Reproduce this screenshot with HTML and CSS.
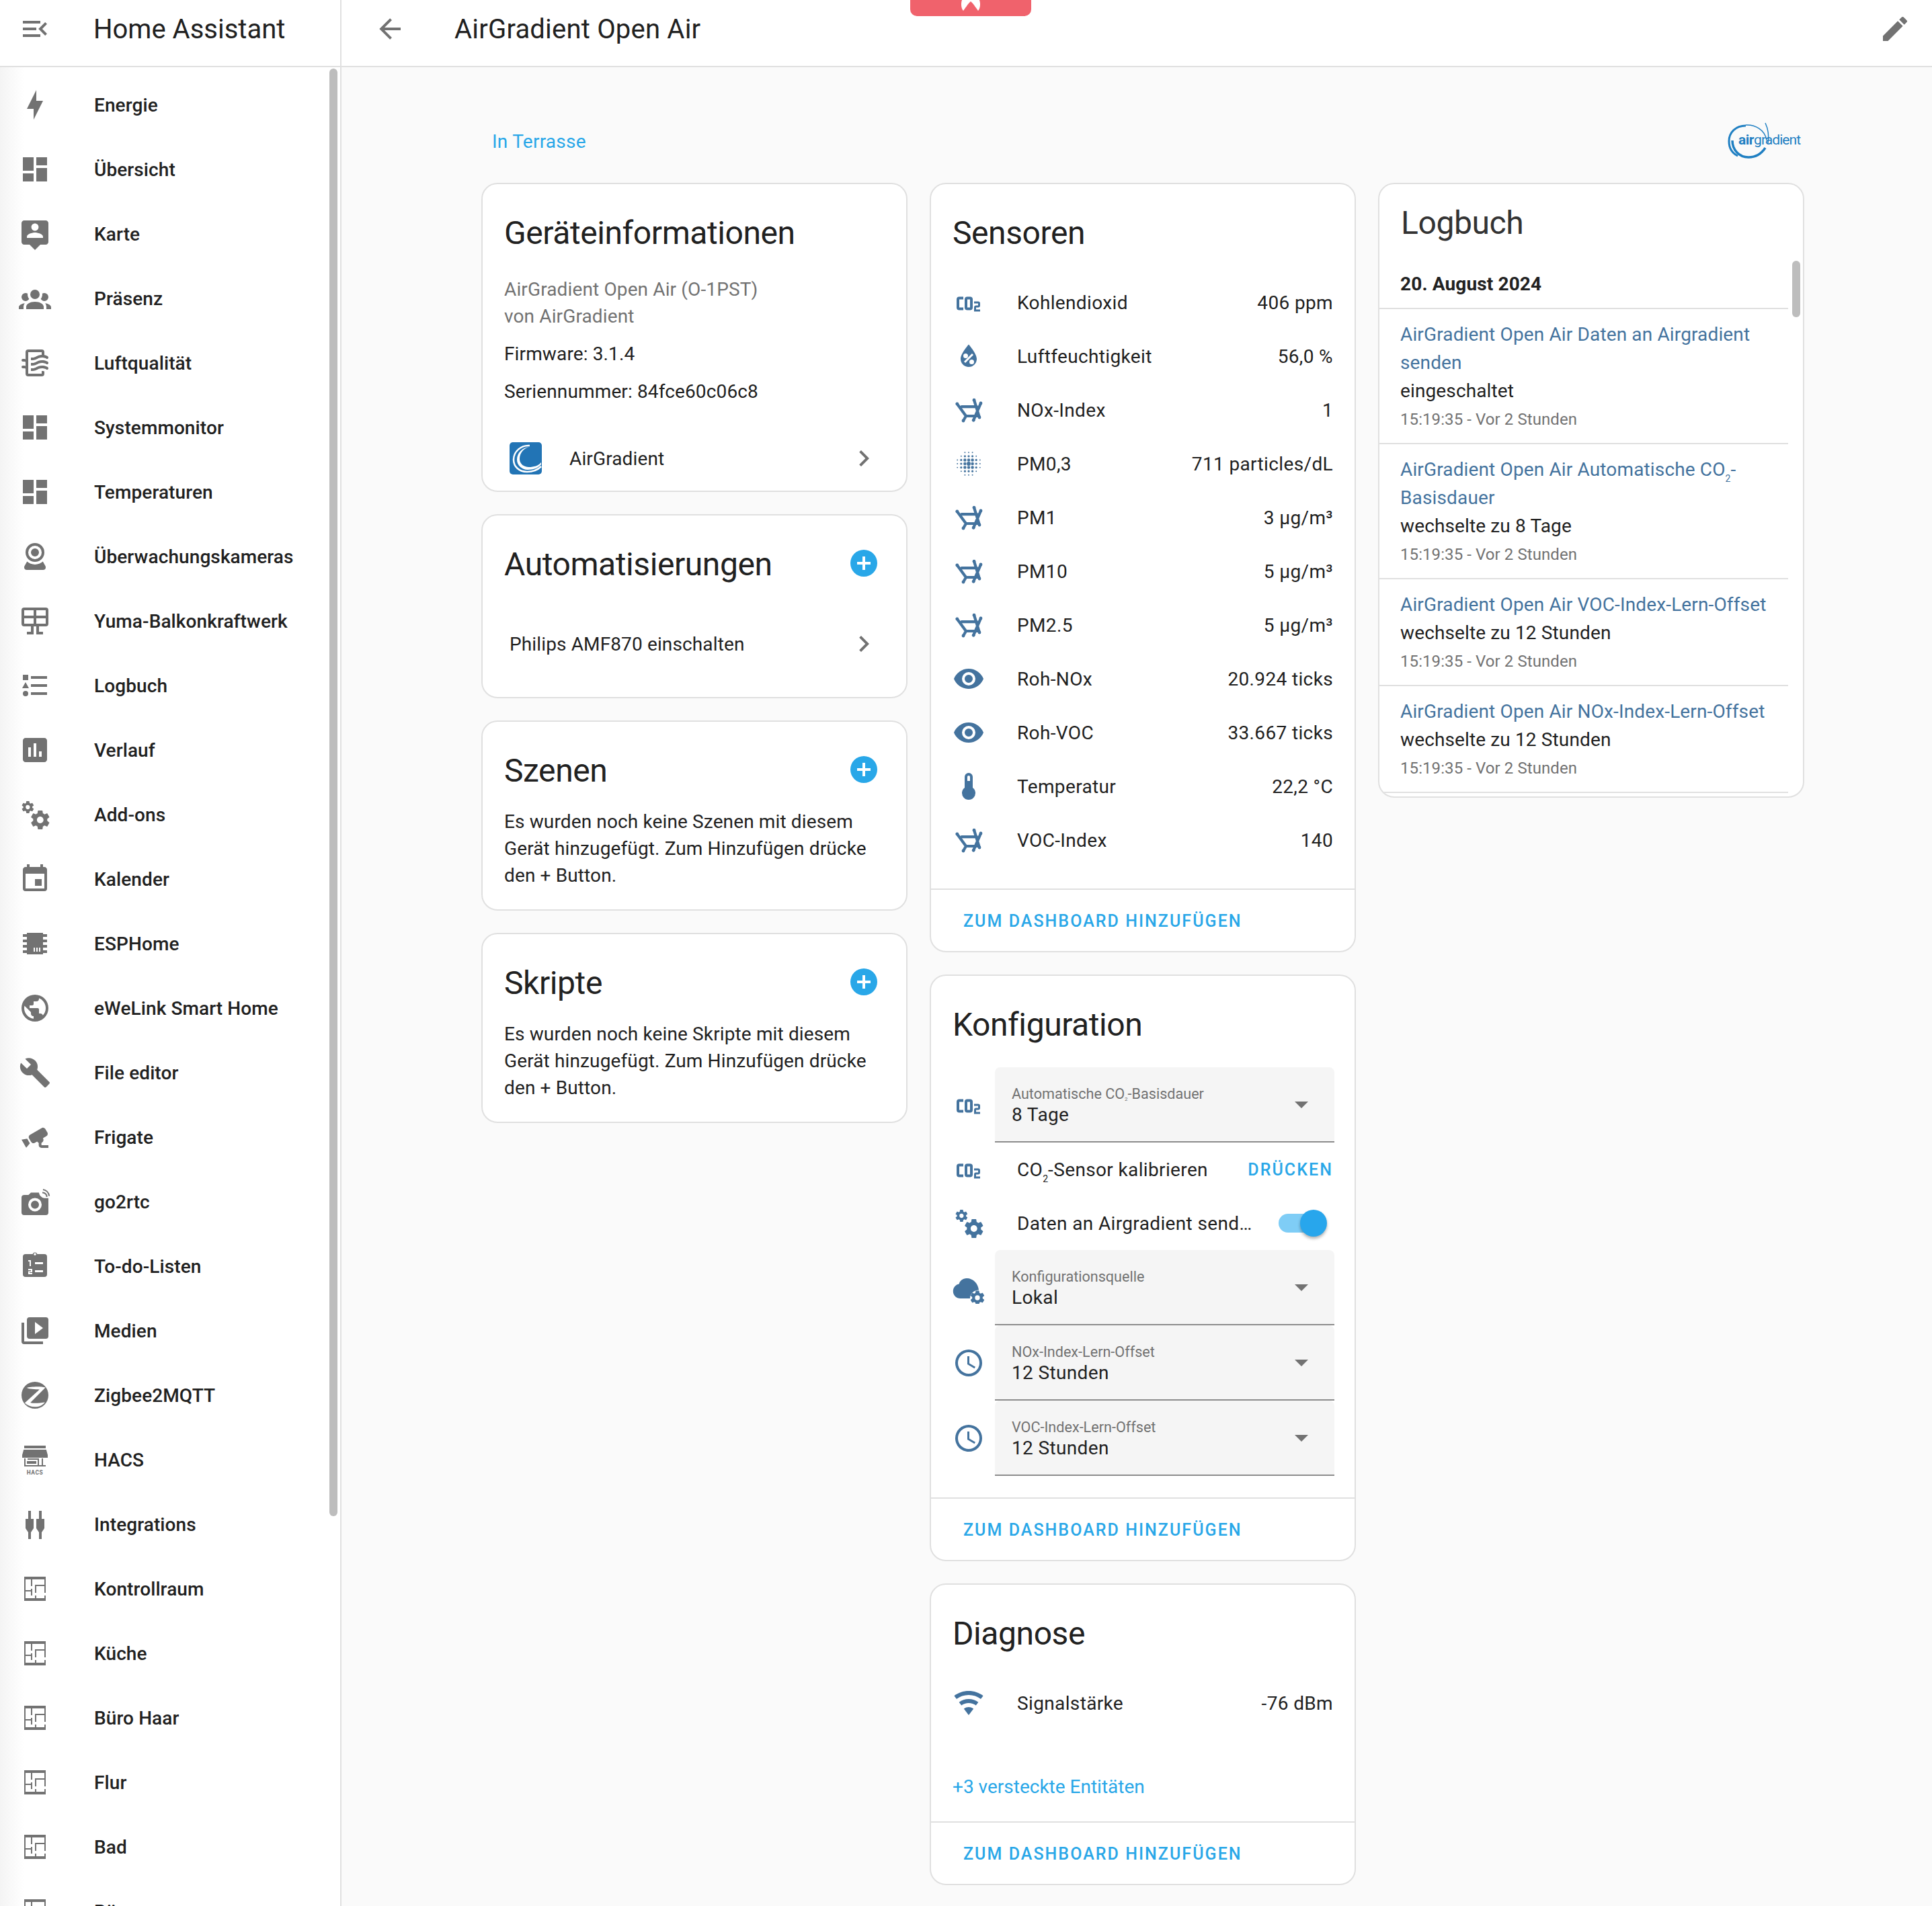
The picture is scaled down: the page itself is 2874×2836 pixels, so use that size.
FILE: index.html
```html
<!DOCTYPE html>
<html lang="de">
<head>
<meta charset="utf-8">
<title>AirGradient Open Air</title>
<link rel="stylesheet" href="styles.css">
</head>
<body>
<svg class="defs" aria-hidden="true">
<symbol id="menu-open" viewBox="0 0 24 24"><path d="M21,15.61L19.59,17L14.58,12L19.59,7L21,8.39L17.44,12L21,15.61M3,6H16V8H3V6M3,13V11H13V13H3M3,18V16H16V18H3Z"/></symbol>
<symbol id="bolt" viewBox="0 0 24 24"><path d="M11 15H6L13 1V9H18L11 23V15Z"/></symbol>
<symbol id="dash" viewBox="0 0 24 24"><path d="M13,3V9H21V3M13,21H21V11H13M3,21H11V15H3M3,13H11V3H3V13Z"/></symbol>
<symbol id="pin" viewBox="0 0 24 24"><path d="M20 2H4C2.9 2 2 2.9 2 4V18C2 19.1 2.9 20 4 20H8L12 24L16 20H20C21.1 20 22 19.1 22 18V4C22 2.9 21.1 2 20 2M12 4.3C13.5 4.3 14.7 5.5 14.7 7S13.5 9.7 12 9.7 9.3 8.5 9.3 7 10.5 4.3 12 4.3M18 15H6V14.1C6 12.1 10 11 12 11S18 12.1 18 14.1V15Z"/></symbol>
<symbol id="group" viewBox="0 0 24 24"><path d="M12,5.5A3.5,3.5 0 0,1 15.5,9A3.5,3.5 0 0,1 12,12.5A3.5,3.5 0 0,1 8.5,9A3.5,3.5 0 0,1 12,5.5M5,8C5.56,8 6.08,8.15 6.53,8.42C6.38,9.85 6.8,11.27 7.66,12.38C7.16,13.34 6.16,14 5,14A3,3 0 0,1 2,11A3,3 0 0,1 5,8M19,8A3,3 0 0,1 22,11A3,3 0 0,1 19,14C17.84,14 16.84,13.34 16.34,12.38C17.2,11.27 17.62,9.85 17.47,8.42C17.92,8.15 18.44,8 19,8M5.5,18.25C5.5,16.18 8.41,14.5 12,14.5C15.59,14.5 18.5,16.18 18.5,18.25V20H5.5V18.25M0,20V18.5C0,17.11 1.89,15.94 4.45,15.6C3.86,16.28 3.5,17.22 3.5,18.25V20H0M24,20H20.5V18.25C20.5,17.22 20.14,16.28 19.55,15.6C22.11,15.94 24,17.11 24,18.5V20Z"/></symbol>
<symbol id="air" viewBox="0 0 24 24"><path d="M19,18.31V20A2,2 0 0,1 17,22H7A2,2 0 0,1 5,20V16.3C4.54,16.12 3.95,16 3,16A1,1 0 0,1 2,15A1,1 0 0,1 3,14C3.82,14 4.47,14.08 5,14.21V11.3C4.54,11.12 3.95,11 3,11A1,1 0 0,1 2,10A1,1 0 0,1 3,9C3.82,9 4.47,9.08 5,9.21V4A2,2 0 0,1 7,2H17A2,2 0 0,1 19,4V6.16C20.78,6.47 21.54,7.13 21.71,7.29C22.1,7.68 22.1,8.32 21.71,8.71C21.32,9.1 20.8,9.09 20.29,8.71C20.29,8.71 19.25,8 17,8C15.74,8 14.91,8.41 13.95,8.9C12.91,9.41 11.74,10 10,10C9.64,10 9.31,10 9,9.96V7.95C9.3,8 9.63,8 10,8C11.26,8 12.09,7.59 13.05,7.11C14.09,6.59 15.27,6 17,6V4H7V20H17V18C18.5,18 18.97,18.29 19,18.31M17,10C15.27,10 14.09,10.59 13.05,11.11C12.09,11.59 11.26,12 10,12C9.63,12 9.3,12 9,11.95V13.96C9.31,14 9.64,14 10,14C11.74,14 12.91,13.41 13.95,12.9C14.91,12.42 15.74,12 17,12C19.25,12 20.29,12.71 20.29,12.71C20.8,13.1 21.32,13.1 21.71,12.71C22.1,12.32 22.1,11.69 21.71,11.29C21.5,11.08 20.25,10 17,10M17,14C15.27,14 14.09,14.59 13.05,15.11C12.09,15.59 11.26,16 10,16C9.63,16 9.3,16 9,15.95V17.96C9.31,18 9.64,18 10,18C11.74,18 12.91,17.41 13.95,16.9C14.91,16.42 15.74,16 17,16C19.25,16 20.29,16.71 20.29,16.71C20.8,17.1 21.32,17.1 21.71,16.71C22.1,16.32 22.1,15.69 21.71,15.29C21.5,15.08 20.25,14 17,14Z"/></symbol>
<symbol id="webcam" viewBox="0 0 24 24"><path d="M12,2A7,7 0 0,1 19,9A7,7 0 0,1 12,16A7,7 0 0,1 5,9A7,7 0 0,1 12,2M12,4A5,5 0 0,0 7,9A5,5 0 0,0 12,14A5,5 0 0,0 17,9A5,5 0 0,0 12,4M12,6A3,3 0 0,1 15,9A3,3 0 0,1 12,12A3,3 0 0,1 9,9A3,3 0 0,1 12,6M6,22A2,2 0 0,1 4,20C4,19.62 4.1,19.27 4.29,18.97L6.11,15.81C7.69,17.17 9.75,18 12,18C14.25,18 16.31,17.17 17.89,15.81L19.71,18.97C19.9,19.27 20,19.62 20,20A2,2 0 0,1 18,22H6Z"/></symbol>
<symbol id="solar" viewBox="0 0 24 24"><path d="M4,2H20A2,2 0 0,1 22,4V14A2,2 0 0,1 20,16H15V20H18V22H13V16H11V22H6V20H9V16H4A2,2 0 0,1 2,14V4A2,2 0 0,1 4,2M4,4V8H11V4H4M4,14H11V10H4V14M20,14V10H13V14H20M20,4H13V8H20V4Z"/></symbol>
<symbol id="logbook" viewBox="0 0 24 24"><path d="M5,9.5L7.5,14H2.5L5,9.5M3,4H7V8H3V4M5,20A2,2 0 0,0 7,18A2,2 0 0,0 5,16A2,2 0 0,0 3,18A2,2 0 0,0 5,20M9,5V7H21V5H9M9,19H21V17H9V19M9,13H21V11H9V13Z"/></symbol>
<symbol id="chart" viewBox="0 0 24 24"><path d="M19 3H5C3.9 3 3 3.9 3 5V19C3 20.1 3.9 21 5 21H19C20.1 21 21 20.1 21 19V5C21 3.9 20.1 3 19 3M9 17H7V10H9V17M13 17H11V7H13V17M17 17H15V13H17V17Z"/></symbol>
<symbol id="cogs" viewBox="0 0 24 24"><path d="M15.9,18.45C17.25,18.45 18.35,17.35 18.35,16C18.35,14.65 17.25,13.55 15.9,13.55C14.54,13.55 13.45,14.65 13.45,16C13.45,17.35 14.54,18.45 15.9,18.45M21.1,16.68L22.58,17.84C22.71,17.95 22.75,18.13 22.66,18.29L21.26,20.71C21.17,20.86 21,20.92 20.83,20.86L19.09,20.16C18.73,20.44 18.34,20.67 17.91,20.85L17.64,22.7C17.62,22.87 17.47,23 17.3,23H14.5C14.32,23 14.18,22.87 14.15,22.7L13.89,20.85C13.46,20.67 13.07,20.44 12.71,20.16L10.96,20.86C10.81,20.92 10.62,20.86 10.54,20.71L9.14,18.29C9.05,18.13 9.09,17.95 9.22,17.84L10.7,16.68L10.65,16L10.7,15.31L9.22,14.16C9.09,14.05 9.05,13.86 9.14,13.71L10.54,11.29C10.62,11.13 10.81,11.07 10.96,11.13L12.71,11.84C13.07,11.56 13.46,11.32 13.89,11.15L14.15,9.29C14.18,9.13 14.32,9 14.5,9H17.3C17.47,9 17.62,9.13 17.64,9.29L17.91,11.15C18.34,11.32 18.73,11.56 19.09,11.84L20.83,11.13C21,11.07 21.17,11.13 21.26,11.29L22.66,13.71C22.75,13.86 22.71,14.05 22.58,14.16L21.1,15.31L21.15,16L21.1,16.68M6.69,8.07C7.56,8.07 8.26,7.37 8.26,6.5C8.26,5.63 7.56,4.92 6.69,4.92A1.58,1.58 0 0,0 5.11,6.5C5.11,7.37 5.82,8.07 6.69,8.07M10.03,6.94L11,7.68C11.07,7.75 11.09,7.87 11.03,7.97L10.13,9.53C10.08,9.63 9.96,9.67 9.86,9.63L8.74,9.18L8,9.62L7.81,10.81C7.79,10.92 7.7,11 7.59,11H5.79C5.67,11 5.58,10.92 5.56,10.81L5.4,9.62L4.64,9.18L3.5,9.63C3.41,9.67 3.3,9.63 3.24,9.53L2.34,7.97C2.28,7.87 2.31,7.75 2.39,7.68L3.34,6.94L3.31,6.5L3.34,6.06L2.39,5.32C2.31,5.25 2.28,5.13 2.34,5.03L3.24,3.47C3.3,3.37 3.41,3.33 3.5,3.37L4.63,3.82L5.4,3.38L5.56,2.19C5.58,2.08 5.67,2 5.79,2H7.59C7.7,2 7.79,2.08 7.81,2.19L8,3.38L8.74,3.82L9.86,3.37C9.96,3.33 10.08,3.37 10.13,3.47L11.03,5.03C11.09,5.13 11.07,5.25 11,5.32L10.03,6.06L10.06,6.5L10.03,6.94Z"/></symbol>
<symbol id="calendar" viewBox="0 0 24 24"><path d="M19,19H5V8H19M16,1V3H8V1H6V3H5C3.89,3 3,3.89 3,5V19A2,2 0 0,0 5,21H19A2,2 0 0,0 21,19V5C21,3.89 20.1,3 19,3H18V1M17,12H12V17H17V12Z"/></symbol>
<symbol id="chip" viewBox="0 0 24 24"><path d="M6,4H18V5H21V7H18V9H21V11H18V13H21V15H18V17H21V19H18V20H6V19H3V17H6V15H3V13H6V11H3V9H6V7H3V5H6V4M11,15V18H12V15H11M13,15V18H14V15H13M15,15V18H16V15H15Z"/></symbol>
<symbol id="earth" viewBox="0 0 24 24"><path d="M17.9,17.39C17.64,16.59 16.89,16 16,16H15V13A1,1 0 0,0 14,12H8V10H10A1,1 0 0,0 11,9V7H13A2,2 0 0,0 15,5V4.59C17.93,5.77 20,8.64 20,12C20,14.08 19.2,15.97 17.9,17.39M11,19.93C7.05,19.44 4,16.08 4,12C4,11.38 4.08,10.78 4.21,10.21L9,15V16A2,2 0 0,0 11,18M12,2A10,10 0 0,0 2,12A10,10 0 0,0 12,22A10,10 0 0,0 22,12A10,10 0 0,0 12,2Z"/></symbol>
<symbol id="wrench" viewBox="0 0 24 24"><path d="M22.7,19L13.6,9.9C14.5,7.6 14,4.9 12.1,3C10.1,1 7.1,0.6 4.7,1.7L9,6L6,9L1.6,4.7C0.4,7.1 0.9,10.1 2.9,12.1C4.8,14 7.5,14.5 9.8,13.6L18.9,22.7C19.3,23.1 19.9,23.1 20.3,22.7L22.6,20.4C23.1,20 23.1,19.3 22.7,19Z"/></symbol>
<symbol id="cctv" viewBox="0 0 24 24"><path d="M18.15,4.94C17.77,4.91 17.37,5 17,5.2L8.35,10.2C7.39,10.76 7.06,12 7.62,12.94L9.12,15.53C9.67,16.5 10.89,16.82 11.85,16.27L13.65,15.23C13.92,15.69 14.32,16.06 14.81,16.27V18.04C14.81,19.13 15.7,20 16.81,20H22V18.04H16.81V16.27C17.72,15.87 18.31,14.97 18.31,14C18.31,13.54 18.19,13.11 17.97,12.73L20.5,11.27C21.47,10.71 21.8,9.5 21.24,8.53L19.74,5.94C19.4,5.34 18.79,5 18.15,4.94M6.22,13.17L2,13.87L2.75,15.17L4.75,18.63L5.5,19.93L8.22,16.63L6.22,13.17Z"/></symbol>
<symbol id="camwifi" viewBox="0 -1 24 24"><path fill-rule="evenodd" d="M4,6H7.2L9,4.2H15C15.2,6.4 17,8.2 19,8.4H22V19A2,2 0 0,1 20,21H4A2,2 0 0,1 2,19V8A2,2 0 0,1 4,6ZM12,8.2A5,5 0 1,0 12,18.2A5,5 0 1,0 12,8.2ZM12,10.2A3,3 0 1,1 12,16.2A3,3 0 1,1 12,10.2Z"/><path fill="none" stroke="currentColor" stroke-width="1" d="M17.5,4.2A3.2,3.2 0 0,1 20.8,7.5M18,2A5.6,5.6 0 0,1 22.6,6.8"/></symbol>
<symbol id="todo" viewBox="0 1 24 24"><path fill-rule="evenodd" d="M5,4H10.3A1.8,1.8 0 0,1 13.7,4H19A2,2 0 0,1 21,6V19A2,2 0 0,1 19,21H5A2,2 0 0,1 3,19V6A2,2 0 0,1 5,4ZM12,3.2A.9,.9 0 1,0 12,5A.9,.9 0 1,0 12,3.2ZM7,8.5V9.5H8V13H9V8.5ZM7,15V16H9V16.7H7V19H10V18H8V17.5H10V15ZM12,10V11.5H18V10ZM12,16V17.5H18V16Z"/></symbol>
<symbol id="play" viewBox="0 0 24 24"><path d="M4,6H2V20A2,2 0 0,0 4,22H18V20H4M20,2H8A2,2 0 0,0 6,4V16A2,2 0 0,0 8,18H20A2,2 0 0,0 22,16V4A2,2 0 0,0 20,2M12,14.5V5.5L18,10L12,14.5Z"/></symbol>
<symbol id="zigbee" viewBox="0 0 24 24"><path fill-rule="evenodd" d="M12,2A10,10 0 1,0 12,22A10,10 0 1,0 12,2ZM6,6.5C8,5.7 16,5.2 19.8,6.3L8.6,17.5C11,18.2 15,18 19.4,17.2C17.6,19.6 15,20.6 12,20.6C9,20.6 6.4,19.6 4.4,17.7L15.4,7.8C12,7.4 8,7.6 6,6.5Z"/></symbol>
<symbol id="hacs" viewBox="0 0 24 24"><path d="M4,1.5H20V3.5H4ZM3.6,4.5H20.4L21.5,8.5V10.5H2.5V8.5Z"/><path fill-rule="evenodd" d="M4,11H5V16H14V12H6.5V11H15V16H17V11H18V16H20V11V17H4ZM6,13H13V15H6Z"/><text x="12" y="23" class="hacs-text">HACS</text></symbol>
<symbol id="plugs" viewBox="0 0 24 24"><path d="M7,2H9V8H11V15L9,18V23H7V18L5,15V8H7ZM15,2H17V8H19V15L17,18V23H15V18L13,15V8H15Z"/></symbol>
<symbol id="floor" viewBox="0 0 24 24"><path d="M10,5V10H9V5H5V13H9V12H10V17H9V14H5V19H12V17H13V19H19V17H20V21H4V3H20V15H19V10H13V15H12V9H19V5H10Z"/></symbol>
<symbol id="back" viewBox="0 0 24 24"><path d="M20,11V13H8L13.5,18.5L12.08,19.92L4.16,12L12.08,4.08L13.5,5.5L8,11H20Z"/></symbol>
<symbol id="pencil" viewBox="0 0 24 24"><path d="M20.71,7.04C21.1,6.65 21.1,6 20.71,5.63L18.37,3.29C18,2.9 17.35,2.9 16.96,3.29L15.12,5.12L18.87,8.87M3,17.25V21H6.75L17.81,9.93L14.06,6.18L3,17.25Z"/></symbol>
<symbol id="chev" viewBox="0 0 24 24"><path d="M8.59,16.58L13.17,12L8.59,7.41L10,6L16,12L10,18L8.59,16.58Z"/></symbol>
<symbol id="plus" viewBox="0 0 24 24"><path d="M17,13H13V17H11V13H7V11H11V7H13V11H17M12,2A10,10 0 0,0 2,12A10,10 0 0,0 12,22A10,10 0 0,0 22,12A10,10 0 0,0 12,2Z"/></symbol>
<symbol id="co2" viewBox="0 -0.7 24 24"><path d="M5,7A2,2 0 0,0 3,9V15A2,2 0 0,0 5,17H8V15H5V9H8V7H5M11,7A2,2 0 0,0 9,9V15A2,2 0 0,0 11,17H13A2,2 0 0,0 15,15V9A2,2 0 0,0 13,7H11M11,9H13V15H11V9M16,10.5V12H19V13.5H17.5A1.5,1.5 0 0,0 16,15V18H20.5V16.5H17.5V15H19A1.5,1.5 0 0,0 20.5,13.5V12A1.5,1.5 0 0,0 19,10.5H16Z"/></symbol>
<symbol id="water" viewBox="0 0 24 24"><path d="M12,3.25C12,3.25 6,10 6,14C6,17.32 8.69,20 12,20A6,6 0 0,0 18,14C18,10 12,3.25 12,3.25M14.47,9.97L15.53,11.03L9.53,17.03L8.47,15.97M9.75,10A1.75,1.75 0 0,1 11.5,11.75A1.75,1.75 0 0,1 9.75,13.5A1.75,1.75 0 0,1 8,11.75A1.75,1.75 0 0,1 9.75,10M14.25,14.5A1.75,1.75 0 0,1 16,16.25A1.75,1.75 0 0,1 14.25,18A1.75,1.75 0 0,1 12.5,16.25A1.75,1.75 0 0,1 14.25,14.5Z"/></symbol>
<symbol id="molecule" viewBox="0 0 24 24"><path fill="none" stroke="currentColor" stroke-width="2.1" stroke-linecap="round" stroke-linejoin="round" d="M3.4,7.5L10,16.5L8,20M6.8,9.6H18M10,16.5H19.4M16,4.6L20,17.5M21,7L15.6,19.6"/><g><circle cx="3.4" cy="7.5" r="1.2"/><circle cx="16" cy="4.6" r="1.2"/><circle cx="21" cy="7" r="1.2"/><circle cx="20" cy="17.5" r="1.2"/><circle cx="15.6" cy="19.6" r="1.2"/><circle cx="8" cy="20" r="1.2"/></g></symbol>
<symbol id="blur" viewBox="0 0 24 24"><g transform="translate(2.4,2.4) scale(.8)" fill="none" stroke="currentColor" stroke-linecap="round"><path stroke-width="3.6" d="M12,12h.01"/><path stroke-width="2.8" d="M8.5,12h.01M15.5,12h.01M12,8.5h.01M12,15.5h.01M8.5,8.5h.01M15.5,8.5h.01M8.5,15.5h.01M15.5,15.5h.01"/><path stroke-width="2" d="M5,12h.01M19,12h.01M12,5h.01M12,19h.01M5,8.5h.01M5,15.5h.01M19,8.5h.01M19,15.5h.01M8.5,5h.01M15.5,5h.01M8.5,19h.01M15.5,19h.01"/><path stroke-width="1.2" d="M1.5,12h.01M22.5,12h.01M12,1.5h.01M12,22.5h.01M1.5,8.5h.01M1.5,15.5h.01M22.5,8.5h.01M22.5,15.5h.01M8.5,1.5h.01M15.5,1.5h.01M8.5,22.5h.01M15.5,22.5h.01M5,5h.01M19,5h.01M5,19h.01M19,19h.01"/></g></symbol>
<symbol id="eye" viewBox="0 0 24 24"><path d="M12,9A3,3 0 0,0 9,12A3,3 0 0,0 12,15A3,3 0 0,0 15,12A3,3 0 0,0 12,9M12,17A5,5 0 0,1 7,12A5,5 0 0,1 12,7A5,5 0 0,1 17,12A5,5 0 0,1 12,17M12,4.5C7,4.5 2.73,7.61 1,12C2.73,16.39 7,19.5 12,19.5C17,19.5 21.27,16.39 23,12C21.27,7.61 17,4.5 12,4.5Z"/></symbol>
<symbol id="thermo" viewBox="0 0 24 24"><path d="M15 13V5A3 3 0 0 0 9 5V13A5 5 0 1 0 15 13M12 4A1 1 0 0 1 13 5V8H11V5A1 1 0 0 1 12 4Z"/></symbol>
<symbol id="clock" viewBox="0 0 24 24"><path d="M12,20A8,8 0 0,0 20,12A8,8 0 0,0 12,4A8,8 0 0,0 4,12A8,8 0 0,0 12,20M12,2A10,10 0 0,1 22,12A10,10 0 0,1 12,22C6.47,22 2,17.5 2,12A10,10 0 0,1 12,2M12.5,7V12.25L17,14.92L16.25,16.15L11,13V7H12.5Z"/></symbol>
<symbol id="cloudcog" viewBox="0 0 24 24"><path d="M10.5,5C7.5,5 5.5,6.8 4.8,9.2C2.2,9.7 .4,11.9 .4,14.6C.4,17.6 2.8,20 5.8,20H13C13,16.5 16,13.8 19.5,13.8C19,9 15.5,5 10.5,5Z"/><g transform="translate(12.26,13.26) scale(.52)"><path d="M12,15.5A3.5,3.5 0 0,1 8.5,12A3.5,3.5 0 0,1 12,8.5A3.5,3.5 0 0,1 15.5,12A3.5,3.5 0 0,1 12,15.5M19.43,12.97C19.47,12.65 19.5,12.33 19.5,12C19.5,11.67 19.47,11.34 19.43,11L21.54,9.37C21.73,9.22 21.78,8.95 21.66,8.73L19.66,5.27C19.54,5.05 19.27,4.96 19.05,5.05L16.56,6.05C16.04,5.66 15.5,5.32 14.87,5.07L14.5,2.42C14.46,2.18 14.25,2 14,2H10C9.75,2 9.54,2.18 9.5,2.42L9.13,5.07C8.5,5.32 7.96,5.66 7.44,6.05L4.95,5.05C4.73,4.96 4.46,5.05 4.34,5.27L2.34,8.73C2.21,8.95 2.27,9.22 2.46,9.37L4.57,11C4.53,11.34 4.5,11.67 4.5,12C4.5,12.33 4.53,12.65 4.57,12.97L2.46,14.63C2.27,14.78 2.21,15.05 2.34,15.27L4.34,18.73C4.46,18.95 4.73,19.03 4.95,18.95L7.44,17.94C7.96,18.34 8.5,18.68 9.13,18.93L9.5,21.58C9.54,21.82 9.75,22 10,22H14C14.25,22 14.46,21.82 14.5,21.58L14.87,18.93C15.5,18.67 16.04,18.34 16.56,17.94L19.05,18.95C19.27,19.03 19.54,18.95 19.66,18.73L21.66,15.27C21.78,15.05 21.73,14.78 21.54,14.63L19.43,12.97Z"/></g></symbol>
<symbol id="wifi" viewBox="0 0 24 24"><path d="M12,21L15.6,16.2C14.6,15.45 13.35,15 12,15C10.65,15 9.4,15.45 8.4,16.2L12,21M12,3C7.95,3 4.21,4.34 1.2,6.6L3,9C5.5,7.12 8.62,6 12,6C15.38,6 18.5,7.12 21,9L22.8,6.6C19.79,4.34 16.05,3 12,3M12,9C9.3,9 6.81,9.89 4.8,11.4L6.6,13.8C8.1,12.67 9.97,12 12,12C14.03,12 15.9,12.67 17.4,13.8L19.2,11.4C17.19,9.89 14.7,9 12,9Z"/></symbol>
<symbol id="drop" viewBox="0 0 24 24"><path d="M7,10L12,15L17,10H7Z"/></symbol>
</svg>

<div class="app">
  <aside class="sidebar">
    <div class="side-head">
      <svg class="ic gray"><use href="#menu-open"/></svg>
      <span class="brand">Home Assistant</span>
    </div>
    <nav class="side-list">
      <a class="side-item"><svg class="ic gray"><use href="#bolt"/></svg><span>Energie</span></a>
      <a class="side-item"><svg class="ic gray"><use href="#dash"/></svg><span>Übersicht</span></a>
      <a class="side-item"><svg class="ic gray"><use href="#pin"/></svg><span>Karte</span></a>
      <a class="side-item"><svg class="ic gray"><use href="#group"/></svg><span>Präsenz</span></a>
      <a class="side-item"><svg class="ic gray"><use href="#air"/></svg><span>Luftqualität</span></a>
      <a class="side-item"><svg class="ic gray"><use href="#dash"/></svg><span>Systemmonitor</span></a>
      <a class="side-item"><svg class="ic gray"><use href="#dash"/></svg><span>Temperaturen</span></a>
      <a class="side-item"><svg class="ic gray"><use href="#webcam"/></svg><span>Überwachungskameras</span></a>
      <a class="side-item"><svg class="ic gray"><use href="#solar"/></svg><span>Yuma-Balkonkraftwerk</span></a>
      <a class="side-item"><svg class="ic gray"><use href="#logbook"/></svg><span>Logbuch</span></a>
      <a class="side-item"><svg class="ic gray"><use href="#chart"/></svg><span>Verlauf</span></a>
      <a class="side-item"><svg class="ic gray"><use href="#cogs"/></svg><span>Add-ons</span></a>
      <a class="side-item"><svg class="ic gray"><use href="#calendar"/></svg><span>Kalender</span></a>
      <a class="side-item"><svg class="ic gray"><use href="#chip"/></svg><span>ESPHome</span></a>
      <a class="side-item"><svg class="ic gray"><use href="#earth"/></svg><span>eWeLink Smart Home</span></a>
      <a class="side-item"><svg class="ic gray"><use href="#wrench"/></svg><span>File editor</span></a>
      <a class="side-item"><svg class="ic gray"><use href="#cctv"/></svg><span>Frigate</span></a>
      <a class="side-item"><svg class="ic gray"><use href="#camwifi"/></svg><span>go2rtc</span></a>
      <a class="side-item"><svg class="ic gray"><use href="#todo"/></svg><span>To-do-Listen</span></a>
      <a class="side-item"><svg class="ic gray"><use href="#play"/></svg><span>Medien</span></a>
      <a class="side-item"><svg class="ic gray"><use href="#zigbee"/></svg><span>Zigbee2MQTT</span></a>
      <a class="side-item"><svg class="ic gray"><use href="#hacs"/></svg><span>HACS</span></a>
      <a class="side-item"><svg class="ic gray"><use href="#plugs"/></svg><span>Integrations</span></a>
      <a class="side-item"><svg class="ic gray"><use href="#floor"/></svg><span>Kontrollraum</span></a>
      <a class="side-item"><svg class="ic gray"><use href="#floor"/></svg><span>Küche</span></a>
      <a class="side-item"><svg class="ic gray"><use href="#floor"/></svg><span>Büro Haar</span></a>
      <a class="side-item"><svg class="ic gray"><use href="#floor"/></svg><span>Flur</span></a>
      <a class="side-item"><svg class="ic gray"><use href="#floor"/></svg><span>Bad</span></a>
      <a class="side-item"><svg class="ic gray"><use href="#floor"/></svg><span>Büro</span></a>
    </nav>
    <div class="side-scroll"></div>
  </aside>

  <div class="main">
    <header class="top">
      <svg class="ic gray"><use href="#back"/></svg>
      <h1 class="title">AirGradient Open Air</h1>
      <svg class="ic gray edit"><use href="#pencil"/></svg>
    </header>
    <div class="red-tab">
      <svg width="28" height="16" viewBox="0 0 28 16"><path fill="#fff" d="M1,0C-1,6 0,13 3,16C6,12 9,7 12,4L14,2L16,4C19,7 22,12 25,16C28,13 29,6 27,0Z"/></svg>
    </div>

    <div class="content">
      <div class="crumbs">
        <a class="crumb">In Terrasse</a>
        <svg class="logo" width="110" height="56" viewBox="0 0 110 56">
          <path fill="none" stroke="#1f7fc2" stroke-width="3" d="M27,4C12,4 2,14 2,27C2,37 7,45 15,49"/>
          <path fill="none" stroke="#1f7fc2" stroke-width="3.5" d="M7,26C7,40 17,51 31,51C42,51 50,46 56,37"/>
          <path fill="none" stroke="#1f7fc2" stroke-width="1.5" d="M27,3C40,2 56,10 58,26"/>
          <path fill="none" stroke="#1f7fc2" stroke-width="1.5" d="M56,0C60,8 62,20 60,30"/>
          <text x="16" y="31.5" class="logo-air">air</text>
          <text x="39" y="31.5" class="logo-grad">gradient</text>
        </svg>
      </div>

      <div class="columns">
        <div class="col">
          <section class="card">
            <h2 class="card-head">Geräteinformationen</h2>
            <div class="info">
              <div class="muted">AirGradient Open Air (O-1PST)</div>
              <div class="muted">von AirGradient</div>
              <div class="info-line">Firmware: 3.1.4</div>
              <div class="info-line">Seriennummer: 84fce60c06c8</div>
            </div>
            <div class="link-row vendor">
              <svg class="vendor-logo" width="48" height="48" viewBox="0 0 48 48">
                <rect width="48" height="48" rx="5" fill="#2274b5"/>
                <path fill="none" stroke="#fff" stroke-width="2.5" d="M30,5C17,4 6,14 6,26C6,36 14,44 26,44C34,44 42,41 47,36"/>
                <path fill="#fff" d="M29,7C19,8 11,16 11,26C11,34 18,41 27,41C36,41 43,38 47,33V30C43,35 36,37 29,37C21,37 15,32 15,25C15,16 21,9 29,7Z"/>
              </svg>
              <span class="vendor-name">AirGradient</span>
              <svg class="ic gray end"><use href="#chev"/></svg>
            </div>
          </section>

          <section class="card">
            <div class="head-line">
              <h2 class="card-head grow">Automatisierungen</h2>
              <svg class="ic accent plus"><use href="#plus"/></svg>
            </div>
            <div class="link-row auto"><span>Philips AMF870 einschalten</span><svg class="ic gray end"><use href="#chev"/></svg></div>
          </section>

          <section class="card">
            <div class="head-line">
              <h2 class="card-head grow tight">Szenen</h2>
              <svg class="ic accent plus"><use href="#plus"/></svg>
            </div>
            <p class="card-text">Es wurden noch keine Szenen mit diesem Gerät hinzugefügt. Zum Hinzufügen drücke den + Button.</p>
          </section>

          <section class="card">
            <div class="head-line">
              <h2 class="card-head grow tight">Skripte</h2>
              <svg class="ic accent plus"><use href="#plus"/></svg>
            </div>
            <p class="card-text">Es wurden noch keine Skripte mit diesem Gerät hinzugefügt. Zum Hinzufügen drücke den + Button.</p>
          </section>
        </div>

        <div class="col">
          <section class="card">
            <h2 class="card-head">Sensoren</h2>
            <div class="row"><svg class="ic blue"><use href="#co2"/></svg><span class="name">Kohlendioxid</span><span class="val">406 ppm</span></div>
            <div class="row"><svg class="ic blue"><use href="#water"/></svg><span class="name">Luftfeuchtigkeit</span><span class="val">56,0 %</span></div>
            <div class="row"><svg class="ic blue"><use href="#molecule"/></svg><span class="name">NOx-Index</span><span class="val">1</span></div>
            <div class="row"><svg class="ic blue"><use href="#blur"/></svg><span class="name">PM0,3</span><span class="val">711 particles/dL</span></div>
            <div class="row"><svg class="ic blue"><use href="#molecule"/></svg><span class="name">PM1</span><span class="val">3 µg/m³</span></div>
            <div class="row"><svg class="ic blue"><use href="#molecule"/></svg><span class="name">PM10</span><span class="val">5 µg/m³</span></div>
            <div class="row"><svg class="ic blue"><use href="#molecule"/></svg><span class="name">PM2.5</span><span class="val">5 µg/m³</span></div>
            <div class="row"><svg class="ic blue"><use href="#eye"/></svg><span class="name">Roh-NOx</span><span class="val">20.924 ticks</span></div>
            <div class="row"><svg class="ic blue"><use href="#eye"/></svg><span class="name">Roh-VOC</span><span class="val">33.667 ticks</span></div>
            <div class="row"><svg class="ic blue"><use href="#thermo"/></svg><span class="name">Temperatur</span><span class="val">22,2 °C</span></div>
            <div class="row"><svg class="ic blue"><use href="#molecule"/></svg><span class="name">VOC-Index</span><span class="val">140</span></div>
            <div class="action">ZUM DASHBOARD HINZUFÜGEN</div>
          </section>

          <section class="card">
            <h2 class="card-head">Konfiguration</h2>
            <div class="row tall">
              <svg class="ic blue"><use href="#co2"/></svg>
              <div class="select"><div class="sel-text"><div class="sel-label">Automatische CO<sub class="sub">2</sub>-Basisdauer</div><div class="sel-value">8 Tage</div></div><svg class="ic gray"><use href="#drop"/></svg></div>
            </div>
            <div class="row"><svg class="ic blue"><use href="#co2"/></svg><span class="name">CO<sub class="sub">2</sub>-Sensor kalibrieren</span><span class="val press">DRÜCKEN</span></div>
            <div class="row"><svg class="ic blue"><use href="#cogs"/></svg><span class="name clip">Daten an Airgradient senden</span>
              <div class="switch"><div class="track"></div><div class="thumb"></div></div>
            </div>
            <div class="row tall">
              <svg class="ic blue"><use href="#cloudcog"/></svg>
              <div class="select"><div class="sel-text"><div class="sel-label">Konfigurationsquelle</div><div class="sel-value">Lokal</div></div><svg class="ic gray"><use href="#drop"/></svg></div>
            </div>
            <div class="row tall">
              <svg class="ic blue"><use href="#clock"/></svg>
              <div class="select"><div class="sel-text"><div class="sel-label">NOx-Index-Lern-Offset</div><div class="sel-value">12 Stunden</div></div><svg class="ic gray"><use href="#drop"/></svg></div>
            </div>
            <div class="row tall">
              <svg class="ic blue"><use href="#clock"/></svg>
              <div class="select"><div class="sel-text"><div class="sel-label">VOC-Index-Lern-Offset</div><div class="sel-value">12 Stunden</div></div><svg class="ic gray"><use href="#drop"/></svg></div>
            </div>
            <div class="action">ZUM DASHBOARD HINZUFÜGEN</div>
          </section>

          <section class="card">
            <h2 class="card-head">Diagnose</h2>
            <div class="row"><svg class="ic blue"><use href="#wifi"/></svg><span class="name">Signalstärke</span><span class="val">-76 dBm</span></div>
            <div class="more">+3 versteckte Entitäten</div>
            <div class="action">ZUM DASHBOARD HINZUFÜGEN</div>
          </section>
        </div>

        <div class="col">
          <section class="card logcard">
            <h2 class="card-head log-head">Logbuch</h2>
            <div class="log-date">20. August 2024</div>
            <div class="log-item">
              <a class="log-link">AirGradient Open Air Daten an Airgradient senden</a>
              <div class="log-state">eingeschaltet</div>
              <div class="log-time">15:19:35 - Vor 2 Stunden</div>
            </div>
            <div class="log-item">
              <a class="log-link">AirGradient Open Air Automatische CO<sub class="sub">2</sub>-Basisdauer</a>
              <div class="log-state">wechselte zu 8 Tage</div>
              <div class="log-time">15:19:35 - Vor 2 Stunden</div>
            </div>
            <div class="log-item">
              <a class="log-link">AirGradient Open Air VOC-Index-Lern-Offset</a>
              <div class="log-state">wechselte zu 12 Stunden</div>
              <div class="log-time">15:19:35 - Vor 2 Stunden</div>
            </div>
            <div class="log-item">
              <a class="log-link">AirGradient Open Air NOx-Index-Lern-Offset</a>
              <div class="log-state">wechselte zu 12 Stunden</div>
              <div class="log-time">15:19:35 - Vor 2 Stunden</div>
            </div>
            <div class="log-scroll"></div>
          </section>
        </div>
      </div>
    </div>
  </div>
</div>
</body>
</html>
```

FILE: styles.css
```css
* { box-sizing: border-box; }
html, body { margin: 0; padding: 0; }
body {
  width: 2874px;
  height: 2836px;
  overflow: hidden;
  background: #fafafa;
  color: #212121;
  font-family: Roboto, "Noto Sans", sans-serif;
  font-size: 28px;
  letter-spacing: .13px;
}
.defs { position: absolute; width: 0; height: 0; }
.hacs-text { font: 700 4.2px Roboto, sans-serif; text-anchor: middle; letter-spacing: .3px; }

.ic { width: 48px; height: 48px; flex: none; fill: currentColor; display: block; }
.gray { color: #727272; }
.blue { color: #44739e; }
.accent { color: #29a7e8; }

.app { display: flex; height: 2836px; overflow: hidden; }

.sidebar {
  position: relative;
  flex: none;
  width: 508px;
  height: 2836px;
  overflow: hidden;
  border-right: 2px solid #e0e0e0;
  background: linear-gradient(90deg, #f4f4f4, #fff 36px);
}
.side-head {
  display: flex;
  align-items: center;
  height: 100px;
  padding: 0 0 12px 28px;
  border-bottom: 2px solid #e0e0e0;
  gap: 63px;
  background: #fff;
}
.brand { margin-top: 2px; font-size: 40px; line-height: 48px; letter-spacing: 0; }
.side-list { padding-top: 8px; }
.side-item {
  display: flex;
  align-items: center;
  height: 96px;
  padding-left: 28px;
  gap: 64px;
  font-weight: 500;
  letter-spacing: .1px;
}
.side-scroll {
  position: absolute;
  left: 490px;
  top: 102px;
  width: 12px;
  height: 2154px;
  border-radius: 6px;
  background: #bdbdbd;
}

.main { position: relative; flex: 1; min-width: 0; }
.top {
  display: flex;
  align-items: center;
  height: 100px;
  padding: 0 31px 12px 48px;
  background: #fff;
  border-bottom: 2px solid #e0e0e0;
}
.title { margin: 2px 0 0 72px; font-size: 40px; font-weight: 400; line-height: 48px; letter-spacing: .2px; }
.edit { margin-left: auto; }
.red-tab {
  position: absolute;
  left: 846px;
  top: 0;
  display: flex;
  justify-content: center;
  width: 180px;
  height: 24px;
  border-radius: 0 0 10px 10px;
  background: #f0626c;
}

.content { padding: 91px 0 0 208px; }
.crumbs {
  display: flex;
  align-items: center;
  justify-content: space-between;
  width: 1967px;
  height: 40px;
  padding: 0 3px 0 16px;
  margin-bottom: 41px;
  letter-spacing: .25px;
}
.crumb { color: #29a7e8; line-height: 40px; }
.logo { flex: none; overflow: visible; }
.logo-air { font: 700 21px Roboto, sans-serif; fill: #1f7fc2; letter-spacing: -.5px; }
.logo-grad { font: 400 21px Roboto, sans-serif; fill: #1f7fc2; letter-spacing: -.9px; }

.columns { display: flex; gap: 33px; align-items: flex-start; }
.col { display: flex; flex-direction: column; gap: 33px; width: 634px; flex: none; }

.card {
  position: relative;
  background: #fff;
  border: 2px solid #e0e0e0;
  border-radius: 24px;
  overflow: hidden;
}
.card-head {
  margin: 0;
  padding: 41px 32px 31px;
  font-size: 48px;
  font-weight: 400;
  line-height: 64px;
  letter-spacing: -.42px;
}
.tight { padding-bottom: 24px; }
.grow { flex: 1; }
.head-line { display: flex; align-items: flex-start; }
.plus { margin: 47px 39px 0 0; }

.info { padding: 1px 32px 0; }
.muted { color: #727272; line-height: 40px; }
.info-line { line-height: 40px; margin-top: 16px; }
.link-row { display: flex; align-items: center; height: 96px; }
.vendor { margin-top: 31px; padding: 0 39px 0 40px; }
.vendor-name { margin-left: 41px; }
.end { margin-left: auto; }
.auto { height: 94px; margin: 8px 0 32px; padding: 0 39px 0 40px; }
.card-text { margin: 0 0 30px; padding: 0 32px; line-height: 40px; }

.row { display: flex; align-items: center; height: 80px; padding: 0 32px; letter-spacing: .36px; }
.row.tall { height: 112px; }
.name { margin-left: 48px; white-space: nowrap; }
.clip { width: 352px; overflow: hidden; text-overflow: ellipsis; }
.val { margin-left: auto; white-space: nowrap; }
.press { color: #29a7e8; font-weight: 500; font-size: 25px; letter-spacing: 2.04px; }
.sub { font-size: 14px; line-height: 0; vertical-align: -9px; letter-spacing: 0; }

.action {
  height: 93px;
  margin-top: 32px;
  padding-left: 48px;
  border-top: 2px solid #e0e0e0;
  color: #29a7e8;
  font-size: 25px;
  font-weight: 500;
  letter-spacing: 2.04px;
  line-height: 93px;
}
.more { margin: 65px 0 -1px; padding: 0 32px; color: #29a7e8; line-height: 40px; letter-spacing: 0; }

.select {
  display: flex;
  align-items: center;
  flex: 1;
  height: 112px;
  margin: 0 -2px 0 15px;
  padding: 0 25px 0 25px;
  background: #f5f5f5;
  border-bottom: 2px solid #8c8c8c;
  border-radius: 8px 8px 0 0;
}
.sel-text { flex: 1; padding-top: 3px; }
.sel-label {
  margin: 0;
  color: #727272;
  font-size: 21.6px;
  line-height: 28px;
  white-space: nowrap;
  letter-spacing: 0;
}
.sel-label .sub { font-size: 8px; vertical-align: -3px; }
.sel-value { line-height: 34px; }

.switch { position: relative; width: 72px; height: 28px; margin: 0 9px 0 auto; }
.track { width: 64px; height: 28px; border-radius: 14px; background: #7fcdf6; }
.thumb {
  position: absolute;
  right: 0;
  top: -6px;
  width: 40px;
  height: 40px;
  border-radius: 50%;
  background: #28a6ec;
  box-shadow: 0 3px 4px rgba(0,0,0,.3);
}

.logcard { height: 915px; }
.log-head { padding: 26px 32px 0 32px; color: #333; }
.log-date {
  margin: 38px 22px 0 0;
  padding: 1px 0 15px 31px;
  font-weight: 700;
  line-height: 40px;
  border-bottom: 2px solid #e0e0e0;
}
.log-item {
  margin-right: 22px;
  padding: 17px 10px 14px 31px;
  border-bottom: 2px solid #e0e0e0;
  line-height: 42px;
}
.log-link { color: #44739e; letter-spacing: .14px; }
.log-time { color: #727272; font-size: 24px; letter-spacing: .08px; }
.log-scroll {
  position: absolute;
  left: 614px;
  top: 114px;
  width: 12px;
  height: 84px;
  border-radius: 6px;
  background: #bdbdbd;
}
```
